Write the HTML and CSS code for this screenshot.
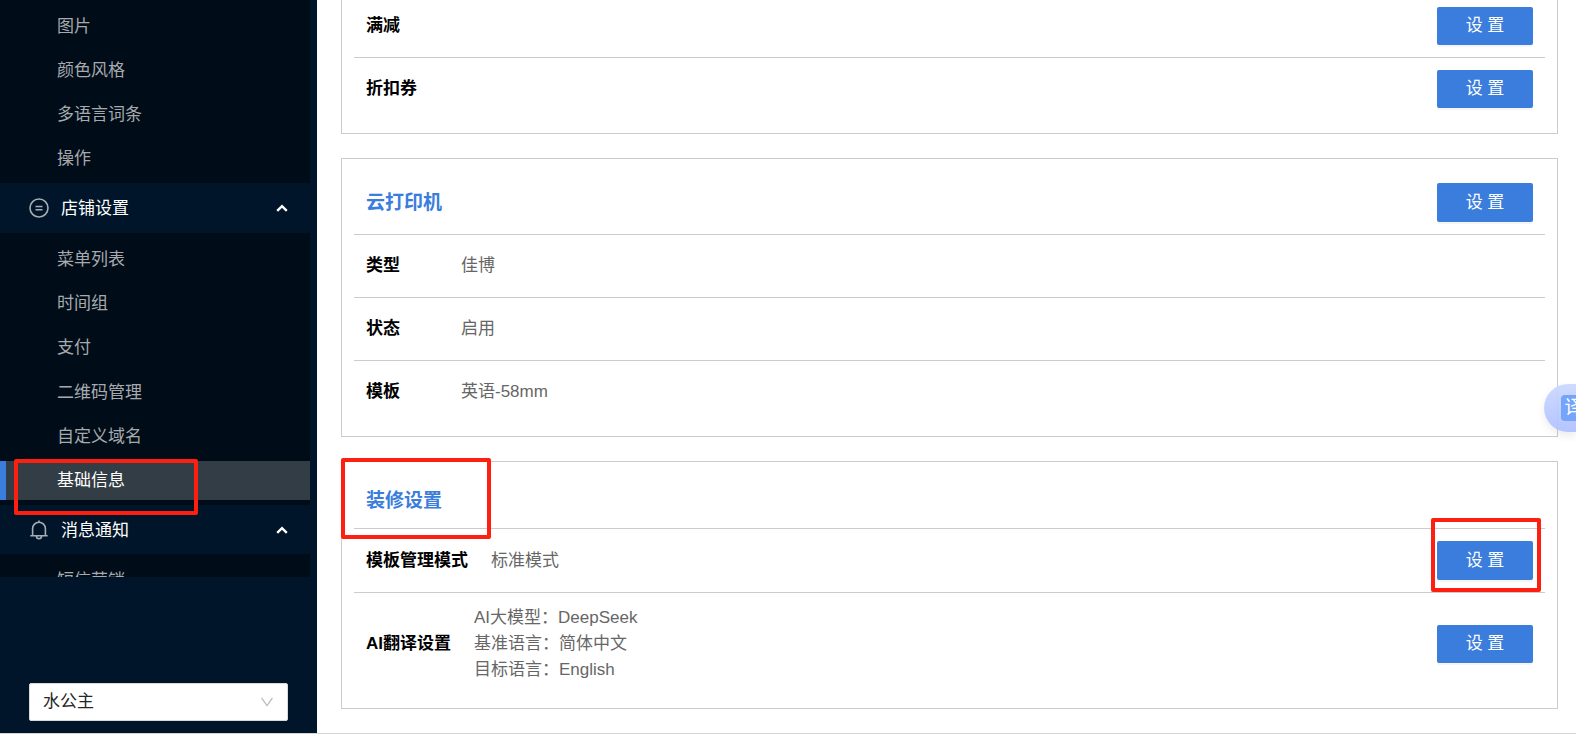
FILE: index.html
```html
<!DOCTYPE html>
<html lang="zh-CN">
<head>
    <meta charset="UTF-8">
    <meta name="viewport" content="width=device-width, initial-scale=1.0">
    <title>基础信息</title>
    <link rel="stylesheet" href="styles.css">
</head>
<body>
    <div class="layout">
        <aside class="sidebar">
            <nav class="menu">
                <ul class="submenu">
                    <li><a href="#">图片</a></li>
                    <li><a href="#">颜色风格</a></li>
                    <li><a href="#">多语言词条</a></li>
                    <li><a href="#">操作</a></li>
                </ul>
                <button class="menu-title" type="button">
                    <svg class="menu-icon" viewBox="0 0 20 20">
                        <circle cx="10" cy="10" r="9"/>
                        <path d="M6.500 8.500h7M6.500 11.700h7"/>
                    </svg>
                    <span>店铺设置</span>
                    <svg class="arrow" viewBox="0 0 12 8"><path d="M1.200 6.900L6 2.200l4.800 4.700"/></svg>
                </button>
                <ul class="submenu submenu-shop">
                    <li><a href="#">菜单列表</a></li>
                    <li><a href="#">时间组</a></li>
                    <li><a href="#">支付</a></li>
                    <li><a href="#">二维码管理</a></li>
                    <li><a href="#">自定义域名</a></li>
                    <li class="selected"><a href="#">基础信息</a><div class="mark mark-menu"></div></li>
                </ul>
                <button class="menu-title" type="button">
                    <svg class="menu-icon" viewBox="0 0 20 20">
                        <path d="M1.300 15.700h17.400M3.600 15.700V8.600a6.400 6.400 0 0 1 12.800 0v7.100M10 2.200V.6M7.500 16.200a2.500 2.500 0 0 0 5 0"/>
                    </svg>
                    <span>消息通知</span>
                    <svg class="arrow" viewBox="0 0 12 8"><path d="M1.200 6.900L6 2.200l4.800 4.700"/></svg>
                </button>
                <ul class="submenu">
                    <li><a href="#">短信营销</a></li>
                </ul>
            </nav>
            <div class="shop">
                <div class="shop-select">
                    <select aria-label="店铺">
                        <option>水公主</option>
                    </select>
                    <svg viewBox="0 0 12 10"><path d="M.6 1L6 8.600 11.400 1"/></svg>
                </div>
            </div>
        </aside>

        <main class="main">
            <div class="content">
                <section class="card">
                    <div class="row">
                        <div class="label">满减</div>
                        <button class="btn" type="button">设 置</button>
                    </div>
                    <div class="row">
                        <div class="label">折扣券</div>
                        <button class="btn" type="button">设 置</button>
                    </div>
                </section>

                <section class="card">
                    <div class="row">
                        <h3>云打印机</h3>
                        <button class="btn btn-tall" type="button">设 置</button>
                    </div>
                    <div class="row">
                        <div class="label">类型</div>
                        <div class="value">佳博</div>
                    </div>
                    <div class="row">
                        <div class="label">状态</div>
                        <div class="value">启用</div>
                    </div>
                    <div class="row">
                        <div class="label">模板</div>
                        <div class="value">英语-58mm</div>
                    </div>
                </section>

                <section class="card">
                    <div class="mark mark-title"></div>
                    <div class="row row-title">
                        <h3>装修设置</h3>
                    </div>
                    <div class="row">
                        <div class="label">模板管理模式</div>
                        <div class="value">标准模式</div>
                        <div class="action">
                            <button class="btn btn-tall" type="button">设 置</button>
                            <div class="mark mark-btn"></div>
                        </div>
                    </div>
                    <div class="row">
                        <div class="label">AI翻译设置</div>
                        <div class="value">
                            <div>AI大模型：DeepSeek</div>
                            <div>基准语言：简体中文</div>
                            <div>目标语言：English</div>
                        </div>
                        <button class="btn" type="button">设 置</button>
                    </div>
                </section>
            </div>
        </main>
    </div>

    <!-- translate helper -->
    <button class="translate" type="button" aria-label="翻译"><span>译</span></button>
</body>
</html>
```
FILE: styles.css
```css
* {
    box-sizing: border-box;
}
body {
    margin: 0;
    font-family: "Liberation Sans", "Noto Sans CJK SC", sans-serif;
    font-size: 17px;
    line-height: 26px;
    color: #000;
    background-color: #fff;
}
button, select {
    font: inherit;
}
ul {
    list-style: none;
    margin: 0;
    padding: 0;
}
svg {
    display: block;
    fill: none;
}
.layout {
    display: flex;
    height: 100vh;
    overflow: hidden;
    border-bottom: 1px solid #d4d4d4;
}

/* sidebar */
.sidebar {
    display: flex;
    flex-direction: column;
    flex: none;
    width: 317px;
    background-color: #001529;
}
.menu {
    flex: 1;
    min-height: 0;
    overflow: hidden;
    padding-right: 7px;
}
.submenu {
    display: flex;
    flex-direction: column;
    justify-content: space-between;
    gap: 5px;
    padding: 7px 0 5px;
    background-color: #000c17;
}
.submenu:first-child {
    min-height: 183px;
}
.submenu-shop {
    min-height: 272px;
}
.submenu li {
    position: relative;
}
.submenu a {
    display: block;
    padding-left: 57px;
    line-height: 39px;
    color: #a6aaae;
    text-decoration: none;
}
.submenu .selected a {
    padding-left: 51px;
    border-left: 6px solid #3a7ddd;
    background-color: #333d45;
    color: #fff;
}
.menu-title {
    display: flex;
    align-items: center;
    width: 100%;
    height: 49px;
    padding: 0 22px 0 29px;
    border: none;
    background-color: #001529;
    color: #fff;
    cursor: pointer;
}
.submenu:first-child + .menu-title {
    height: 50px;
}
.menu-title span {
    padding-top: 2px;
}
.menu-icon {
    width: 20px;
    height: 20px;
    margin-right: 12px;
    stroke: #a6adb4;
    stroke-width: 1.6;
}
.arrow {
    width: 12px;
    height: 8px;
    margin-left: auto;
    stroke: #fff;
    stroke-width: 2.4;
}
.shop {
    padding: 106px 29px 12px;
}
.shop-select {
    position: relative;
}
.shop-select select {
    display: block;
    width: 100%;
    height: 38px;
    padding: 0 13px;
    border: 1px solid #d9d9d9;
    border-radius: 2px;
    background-color: #fff;
    color: #262626;
    appearance: none;
}
.shop-select svg {
    position: absolute;
    top: 14px;
    right: 15px;
    width: 12px;
    height: 10px;
    stroke: #bfbfbf;
    stroke-width: 1.3;
    pointer-events: none;
}

/* content */
.main {
    flex: 1;
    min-width: 0;
    overflow: hidden;
}
.content {
    display: flex;
    flex-direction: column;
    gap: 24px;
    margin-top: -18px;
    padding: 0 18px 24px 24px;
}
.card {
    position: relative;
    padding: 12px;
    border: 1px solid #ccc;
}
.row {
    display: flex;
    align-items: center;
    gap: 23px;
    min-height: 63px;
    padding: 12px;
    border-bottom: 1px solid #ccc;
}
.row:last-child {
    border-bottom-color: transparent;
}
.row-title {
    min-height: 0;
}
.row h3 {
    margin: 0;
    font-size: 19px;
    line-height: 30px;
    color: #3a7ddd;
}
.label {
    min-width: 72px;
    font-weight: bold;
}
.value {
    color: #666;
}
.action {
    position: relative;
    margin-left: auto;
}
.btn {
    display: block;
    width: 96px;
    height: 38px;
    margin-left: auto;
    padding: 0;
    border: none;
    border-radius: 2px;
    background-color: #3a7ddd;
    box-shadow: 0 2px 0 rgba(0,0,0,0.04);
    color: #fff;
    cursor: pointer;
}
.btn-tall {
    height: 39px;
}

/* red highlight frames */
.mark {
    position: absolute;
    z-index: 1;
    border: 4px solid #ff1f10;
    border-radius: 2px;
    pointer-events: none;
}
.mark-menu {
    top: -2px;
    left: 14px;
    width: 184px;
    height: 56px;
}
.mark-title {
    top: -4px;
    left: -1px;
    width: 150px;
    height: 81px;
}
.mark-btn {
    top: -23px;
    left: -6px;
    width: 110px;
    height: 74px;
}

.translate {
    position: fixed;
    top: 384px;
    right: 0;
    width: 32px;
    height: 48px;
    padding: 0 0 0 17px;
    overflow: hidden;
    border: none;
    border-radius: 24px 0 0 24px;
    background: linear-gradient(rgba(200,215,255,0.9), rgba(172,190,255,0.9));
    box-shadow: 0 4px 8px rgba(0,0,0,0.08);
    cursor: pointer;
}
.translate span {
    display: block;
    width: 26px;
    border-radius: 4px;
    background-color: #74a5f8;
    color: #fff;
    font-size: 19px;
}
```
